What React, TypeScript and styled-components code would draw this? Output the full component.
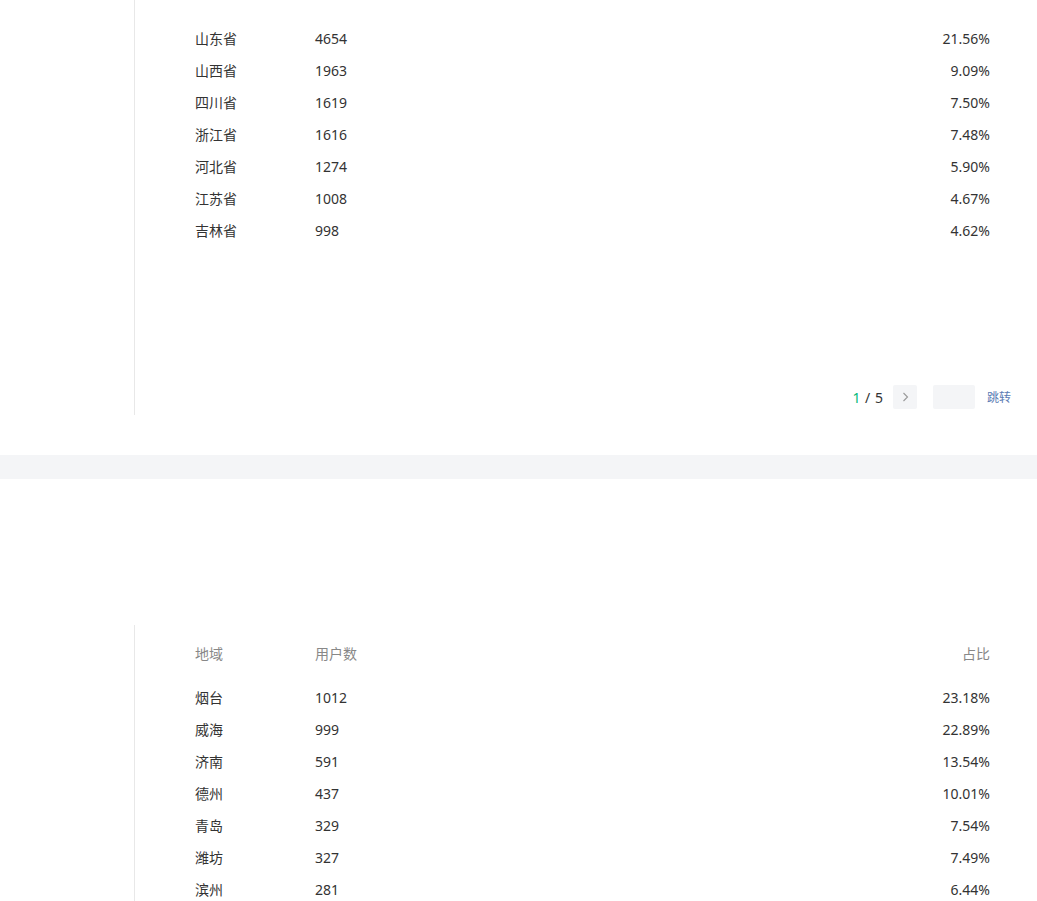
import styled, { createGlobalStyle } from 'styled-components';

const GlobalStyle = createGlobalStyle`
  html, body {
    margin: 0;
    padding: 0;
    background: #fff;
    overflow: hidden;
  }
  body {
    font-family: "Noto Sans", "Noto Sans CJK SC", sans-serif;
    color: #333;
  }
`;

type Row = { region: string; users: number; ratio: string };

const provinces: Row[] = [
  { region: '山东省', users: 4654, ratio: '21.56%' },
  { region: '山西省', users: 1963, ratio: '9.09%' },
  { region: '四川省', users: 1619, ratio: '7.50%' },
  { region: '浙江省', users: 1616, ratio: '7.48%' },
  { region: '河北省', users: 1274, ratio: '5.90%' },
  { region: '江苏省', users: 1008, ratio: '4.67%' },
  { region: '吉林省', users: 998, ratio: '4.62%' },
];

const cities: Row[] = [
  { region: '烟台', users: 1012, ratio: '23.18%' },
  { region: '威海', users: 999, ratio: '22.89%' },
  { region: '济南', users: 591, ratio: '13.54%' },
  { region: '德州', users: 437, ratio: '10.01%' },
  { region: '青岛', users: 329, ratio: '7.54%' },
  { region: '潍坊', users: 327, ratio: '7.49%' },
  { region: '滨州', users: 281, ratio: '6.44%' },
];

const Page = styled.div`
  width: 1037px;
  height: 901px;
  overflow: hidden;
`;

const Section = styled.section<{ $height?: number }>`
  display: flex;
  height: ${({ $height }) => ($height ? `${$height}px` : 'auto')};
`;

const Gutter = styled.div`
  width: 134px;
  flex-shrink: 0;
`;

const Body = styled.div<{ $padTop: number }>`
  flex: 1;
  border-left: 1px solid #e8e8e8;
  display: flex;
  flex-direction: column;
  padding-top: ${({ $padTop }) => $padTop}px;
`;

const Table = styled.div`
  margin: 0 47px 0 60px;
`;

const HeadRow = styled.div`
  display: grid;
  grid-template-columns: 120px 1fr 120px;
  height: 32px;
  line-height: 32px;
  font-size: 14px;
  color: #888;
  margin-bottom: 12px;
`;

const DataRow = styled.div`
  display: grid;
  grid-template-columns: 120px 1fr 120px;
  height: 32px;
  line-height: 32px;
  font-size: 14px;
  color: #333;
`;

const Right = styled.span`
  text-align: right;
`;

const Pager = styled.div`
  margin-top: auto;
  margin-bottom: 6px;
  align-self: flex-end;
  margin-right: 26px;
  display: flex;
  align-items: center;
  height: 24px;
  font-size: 14px;
`;

const PageInfo = styled.span`
  color: #333;
  margin-right: 10px;
  word-spacing: 1px;
`;

const Current = styled.span`
  color: #00b97a;
`;

const NextButton = styled.button`
  width: 24px;
  height: 24px;
  border: none;
  border-radius: 2px;
  background: #f4f5f7;
  padding: 0;
  display: flex;
  align-items: center;
  justify-content: center;
  margin-right: 16px;
`;

const JumpInput = styled.input`
  width: 42px;
  height: 24px;
  box-sizing: border-box;
  border: none;
  border-radius: 2px;
  background: #f4f5f7;
  outline: none;
  margin-right: 12px;
`;

const JumpLink = styled.span`
  font-size: 12px;
  color: #5b7bb3;
`;

const Band = styled.div`
  height: 24px;
  margin-top: 40px;
  background: #f4f5f7;
`;

const Spacer = styled.div`
  height: 146px;
`;

const ResultTable = ({ rows, head }: { rows: Row[]; head?: boolean }) => (
  <Table>
    {head && (
      <HeadRow>
        <span>地域</span>
        <span>用户数</span>
        <Right>占比</Right>
      </HeadRow>
    )}
    {rows.map((r) => (
      <DataRow key={r.region}>
        <span>{r.region}</span>
        <span>{r.users}</span>
        <Right>{r.ratio}</Right>
      </DataRow>
    ))}
  </Table>
);

export default function App() {
  return (
    <Page>
      <GlobalStyle />
      <Section $height={415}>
        <Gutter />
        <Body $padTop={23}>
          <ResultTable rows={provinces} />
          <Pager>
            <PageInfo>
              <Current>1</Current> / 5
            </PageInfo>
            <NextButton>
              <svg width="12" height="12" viewBox="0 0 12 12">
                <path d="M4.5 2 L8.5 6 L4.5 10" fill="none" stroke="#999" strokeWidth="1.1" />
              </svg>
            </NextButton>
            <JumpInput />
            <JumpLink>跳转</JumpLink>
          </Pager>
        </Body>
      </Section>
      <Band />
      <Spacer />
      <Section $height={276}>
        <Gutter />
        <Body $padTop={13}>
          <ResultTable rows={cities} head />
        </Body>
      </Section>
    </Page>
  );
}
